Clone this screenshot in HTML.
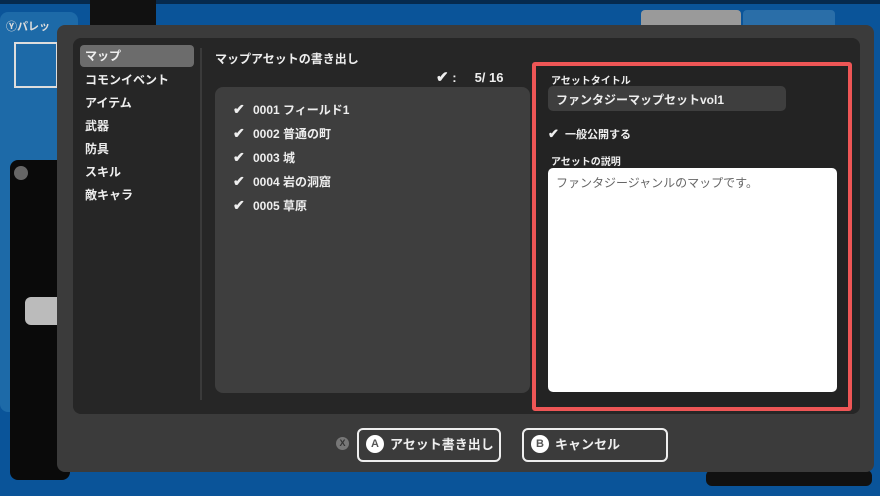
<!DOCTYPE html>
<html><head><meta charset="utf-8"><style>
*{margin:0;padding:0;box-sizing:border-box}
body{width:880px;height:496px;overflow:hidden;background:#0a5499;font-family:"Liberation Sans","Noto Sans CJK JP",sans-serif;font-weight:bold;color:#eee;position:relative}
.a{position:absolute}
.t{font-size:12px;white-space:nowrap}
.ck{display:inline-block;width:20px;font-size:14px}
</style></head><body>
<!-- background editor -->
<div class="a" style="left:0;top:0;width:880px;height:4px;background:#062a4e"></div>
<div class="a" style="left:0;top:12px;width:78px;height:400px;background:#1d6aa8;border-radius:8px"></div>
<div class="a" style="left:14px;top:42px;width:44px;height:46px;border:2px solid #ddd"></div>
<div class="a t" style="left:6px;top:18px;font-size:11px;color:#ddd">Ⓨパレッ</div>
<div class="a" style="left:90px;top:0;width:66px;height:30px;background:#111"></div>
<div class="a" style="left:641px;top:10px;width:100px;height:20px;background:#9a9a9a;border-radius:4px"></div>
<div class="a" style="left:743px;top:10px;width:92px;height:20px;background:#2a6ea8;border-radius:4px"></div>
<div class="a" style="left:10px;top:160px;width:60px;height:320px;background:#0a0a0a;border-radius:8px"></div>
<div class="a" style="left:14px;top:166px;width:14px;height:14px;border-radius:50%;background:#666"></div>
<div class="a" style="left:25px;top:297px;width:40px;height:28px;background:#bbb;border-radius:6px"></div>
<div class="a" style="left:706px;top:470px;width:166px;height:16px;background:#111;border-radius:6px"></div>
<!-- modal -->
<div class="a" style="left:57px;top:25px;width:817px;height:447px;background:#3b3b3b;border-radius:8px"></div>
<div class="a" style="left:73px;top:38px;width:787px;height:376px;background:#262626;border-radius:8px"></div>
<div class="a" style="left:80px;top:45px;width:114px;height:22px;background:#6c6c6c;border-radius:4px"></div>
<div class="a t" style="left:85px;top:48px;line-height:16px">マップ</div>
<div class="a t" style="left:85px;top:71px">コモンイベント</div>
<div class="a t" style="left:85px;top:94px">アイテム</div>
<div class="a t" style="left:85px;top:117px">武器</div>
<div class="a t" style="left:85px;top:140px">防具</div>
<div class="a t" style="left:85px;top:163px">スキル</div>
<div class="a t" style="left:85px;top:186px">敵キャラ</div>
<div class="a" style="left:200px;top:48px;width:2px;height:352px;background:#3a3a3a"></div>
<div class="a t" style="left:215px;top:50px">マップアセットの書き出し</div>
<div class="a t" style="left:436px;top:68px;font-size:13px"><span style="font-size:15px">✔</span> :&nbsp;&nbsp;&nbsp;&nbsp;&nbsp;5/ 16</div>
<div class="a" style="left:215px;top:87px;width:315px;height:306px;background:#3e3e3e;border-radius:8px"></div>
<div class="a t" style="left:233px;top:98px;line-height:23px"><span class="ck">✔</span>0001 フィールド1<br><span class="ck">✔</span>0002 普通の町<br><span class="ck">✔</span>0003 城<br><span class="ck">✔</span>0004 岩の洞窟<br><span class="ck">✔</span>0005 草原</div>
<!-- red panel -->
<div class="a" style="left:532px;top:62px;width:320px;height:349px;border:4px solid #ee5656;border-radius:3px;background:#232323"></div>
<div class="a t" style="left:551px;top:72px;font-size:10px">アセットタイトル</div>
<div class="a" style="left:548px;top:86px;width:238px;height:25px;background:#3e3e3e;border-radius:5px"></div>
<div class="a t" style="left:556px;top:91px">ファンタジーマップセットvol1</div>
<div class="a t" style="left:548px;top:126px;font-size:11px"><span style="font-size:13px">✔</span>&nbsp;&nbsp;一般公開する</div>
<div class="a t" style="left:551px;top:153px;font-size:10px">アセットの説明</div>
<div class="a" style="left:548px;top:168px;width:289px;height:224px;background:#fff;border-radius:5px"></div>
<div class="a t" style="left:556px;top:174px;color:#666;font-weight:normal">ファンタジージャンルのマップです。</div>
<!-- buttons -->
<div class="a" style="left:336px;top:437px;width:13px;height:13px;border-radius:50%;background:#777;color:#333;font-size:9px;text-align:center;line-height:13px">X</div>
<div class="a" style="left:357px;top:428px;width:144px;height:34px;border:2px solid #eee;border-radius:6px"></div>
<div class="a" style="left:366px;top:435px;width:18px;height:18px;border-radius:50%;background:#fff;color:#555;font-size:11px;text-align:center;line-height:18px">A</div>
<div class="a t" style="left:390px;top:434px;font-size:13px">アセット書き出し</div>
<div class="a" style="left:522px;top:428px;width:146px;height:34px;border:2px solid #eee;border-radius:6px"></div>
<div class="a" style="left:531px;top:435px;width:18px;height:18px;border-radius:50%;background:#fff;color:#555;font-size:11px;text-align:center;line-height:18px">B</div>
<div class="a t" style="left:555px;top:434px;font-size:13px">キャンセル</div>
</body></html>
